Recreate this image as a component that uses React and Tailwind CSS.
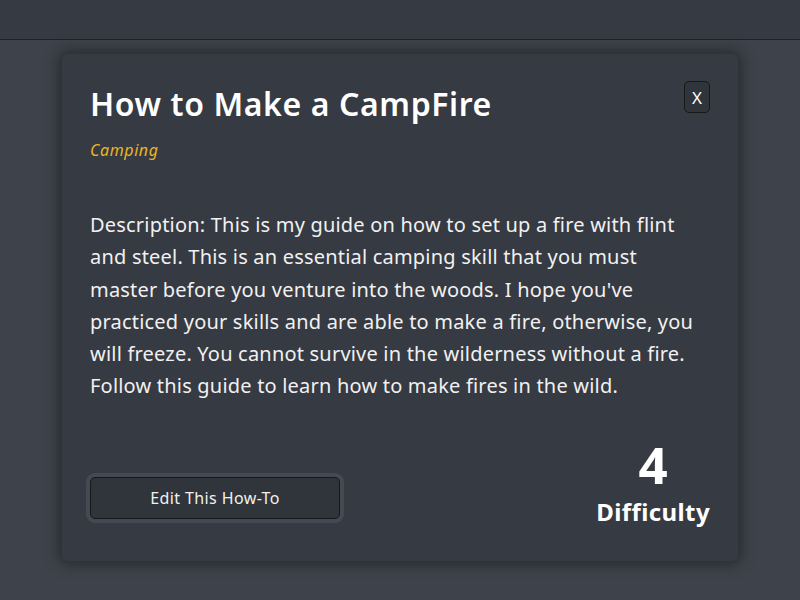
export default function App() {
  return (
    <div
      className="min-h-screen bg-[#3e424a] text-white"
      style={{ fontFamily: '"Noto Sans", "Open Sans", sans-serif' }}
    >
      <header className="h-10 bg-[#363a43] border-b border-[#1f2226]" />
      <main className="pt-[14px]">
        <div className="mx-auto w-[676px] h-[507px] rounded-md bg-[#363a42] shadow-[0_0_14px_4px_rgba(0,0,0,0.35)] px-7 pt-[26px] flex flex-col">
          <div className="flex items-start justify-between">
            <div>
              <h1 className="text-[32px] font-semibold leading-[48px] tracking-[0.6px]">How to Make a CampFire</h1>
              <p className="mt-[10px] text-base italic text-[#e9b526] leading-6 tracking-[0.6px]">Camping</p>
            </div>
            <button className="mt-[1px] h-8 w-[26px] rounded-[5px] border border-[#16181b] bg-[#30343b] text-[17px] leading-none text-white">
              X
            </button>
          </div>
          <p className="mt-[47px] pr-[10px] text-[20px] leading-[32.3px] tracking-[0.2px] text-[#f1f1f1]">
            Description: This is my guide on how to set up a fire with flint and steel. This is an essential camping
            skill that you must master before you venture into the woods. I hope you've practiced your skills and are
            able to make a fire, otherwise, you will freeze. You cannot survive in the wilderness without a fire.
            Follow this guide to learn how to make fires in the wild.
          </p>
          <div className="mt-auto mb-[33px] flex items-end justify-between">
            <button className="mb-[9px] h-[42px] w-[250px] rounded-[5px] border border-[#16181b] bg-[#30343b] text-base tracking-[0.4px] text-[#f1f1f1] ring-4 ring-[#454a52]">
              Edit This How-To
            </button>
            <div className="flex flex-col items-center">
              <span className="text-[51px] font-bold leading-[52px]">4</span>
              <span className="mt-[6px] text-2xl font-bold leading-8 tracking-[0.4px]">Difficulty</span>
            </div>
          </div>
        </div>
      </main>
    </div>
  );
}
